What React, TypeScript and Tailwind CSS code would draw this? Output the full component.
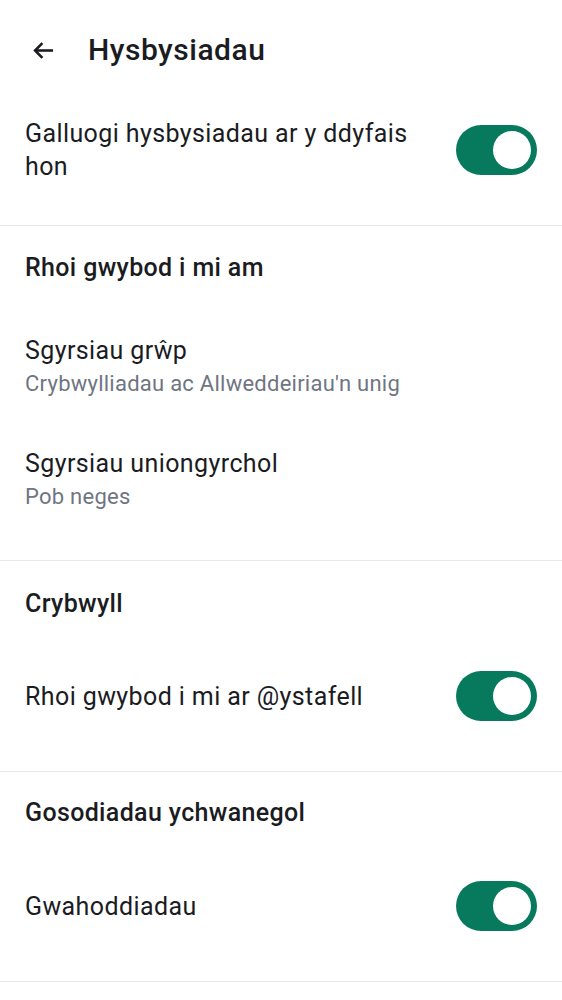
import React from "react";

function Toggle() {
  return (
    <div className="w-[81px] h-[50px] rounded-full bg-[#077a5d] flex items-center justify-end pr-[6px] shrink-0">
      <div className="w-[38px] h-[38px] rounded-full bg-white" />
    </div>
  );
}

function Divider() {
  return <div className="h-px bg-[#e6e8ec]" />;
}

const body = "text-[25px] leading-[33px] tracking-[0.4px]";
const sub = "text-[22px] leading-[33px] tracking-[0.25px] text-[#6f7582]";
const head = "text-[25px] font-medium tracking-[0.35px]";

export default function App() {
  return (
    <div className="w-[562px] h-[1000px] bg-white text-[#1b1c1f] overflow-hidden" style={{ fontFamily: "Roboto, 'Noto Sans', sans-serif" }}>
      {/* Header */}
      <div className="h-[100px] flex items-center">
        <div className="w-[88px] flex items-center pl-[30px]">
          <svg width="27" height="27" viewBox="0 0 24 24" fill="none" stroke="#1b1c1f" strokeWidth="2.3">
            <path d="M20.5 12H4.5" />
            <path d="M11 5.5L4.5 12L11 18.5" strokeLinejoin="miter" />
          </svg>
        </div>
        <div className="text-[30px] font-medium leading-none tracking-[0.5px]">Hysbysiadau</div>
      </div>

      {/* Enable row */}
      <div className="flex items-center px-[25px] pt-[17px] pb-[42px]">
        <div className={`flex-1 pr-[40px] ${body}`}>Galluogi hysbysiadau ar y ddyfais hon</div>
        <Toggle />
      </div>
      <Divider />

      {/* Section: Rhoi gwybod i mi am */}
      <div className={`h-[84px] flex items-center px-[25px] ${head}`}>Rhoi gwybod i mi am</div>
      <div className="h-[113px] flex flex-col justify-center px-[25px]">
        <div className={body}>Sgyrsiau grŵp</div>
        <div className={sub}>Crybwylliadau ac Allweddeiriau'n unig</div>
      </div>
      <div className="h-[113px] flex flex-col justify-center px-[25px]">
        <div className={body}>Sgyrsiau uniongyrchol</div>
        <div className={sub}>Pob neges</div>
      </div>
      <div className="h-[24px]" />
      <Divider />

      {/* Section: Crybwyll */}
      <div className={`h-[86px] flex items-center px-[25px] ${head}`}>Crybwyll</div>
      <div className="h-[98px] flex items-center px-[25px]">
        <div className={`flex-1 ${body}`}>Rhoi gwybod i mi ar @ystafell</div>
        <Toggle />
      </div>
      <div className="h-[26px]" />
      <Divider />

      {/* Section: Gosodiadau ychwanegol */}
      <div className={`h-[82px] flex items-center px-[25px] ${head}`}>Gosodiadau ychwanegol</div>
      <div className="h-[104px] flex items-center px-[25px]">
        <div className={`flex-1 ${body}`}>Gwahoddiadau</div>
        <Toggle />
      </div>
      <div className="h-[23px]" />
      <Divider />
    </div>
  );
}
